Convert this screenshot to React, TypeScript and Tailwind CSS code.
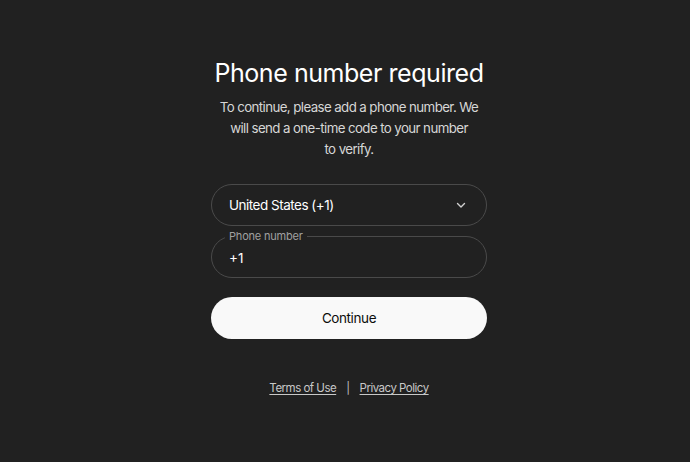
import React from "react";

export default function App() {
  return (
    <div
      className="w-[690px] h-[462px] bg-[#212121] flex flex-col items-center pl-[8px] text-[#ececec]"
      style={{ fontFamily: "Inter, 'Noto Sans', sans-serif" }}
    >
      <div className="w-[276px] flex flex-col items-center pt-[56px]">
        <h1 className="text-[25px] leading-[34px] font-normal text-white tracking-[-0.45px] whitespace-nowrap">
          Phone number required
        </h1>
        <p className="mt-[7px] text-[13.3px] leading-[21px] text-center text-[#d6d6d6] tracking-[-0.6px] whitespace-nowrap">
          To continue, please add a phone number. We
          <br />
          will send a one-time code to your number
          <br />
          to verify.
        </p>
        <button className="mt-[24px] w-full h-[42px] rounded-full border border-[#4a4a4a] flex items-center justify-between pl-[17px] pr-[19px] text-[13.5px] tracking-[-0.5px] text-white">
          <span>United States (+1)</span>
          <svg width="12" height="12" viewBox="0 0 12 12" fill="none">
            <path d="M2.5 4.5 L6 8 L9.5 4.5" stroke="#d0d0d0" strokeWidth="1.4" strokeLinecap="round" strokeLinejoin="round" />
          </svg>
        </button>
        <div className="relative mt-[10px] w-full h-[42px] rounded-full border border-[#4a4a4a] flex items-center pl-[17px] text-[13.5px] text-white">
          <span className="absolute left-[13px] top-[-8px] px-[4px] bg-[#212121] text-[11px] leading-[14px] text-[#a0a0a0] tracking-[-0.2px]">
            Phone number
          </span>
          <span className="mt-[2px]">+1</span>
        </div>
        <button className="mt-[19px] w-full h-[42px] rounded-full bg-[#f9f9f9] text-[#0d0d0d] text-[13.5px] tracking-[-0.4px]">
          Continue
        </button>
        <div className="mt-[41px] flex items-center gap-[10px] text-[11.5px] text-[#c8c8c8] tracking-[-0.5px]">
          <span className="underline underline-offset-2">Terms of Use</span>
          <span className="text-[#c0c0c0]">|</span>
          <span className="underline underline-offset-2">Privacy Policy</span>
        </div>
      </div>
    </div>
  );
}
